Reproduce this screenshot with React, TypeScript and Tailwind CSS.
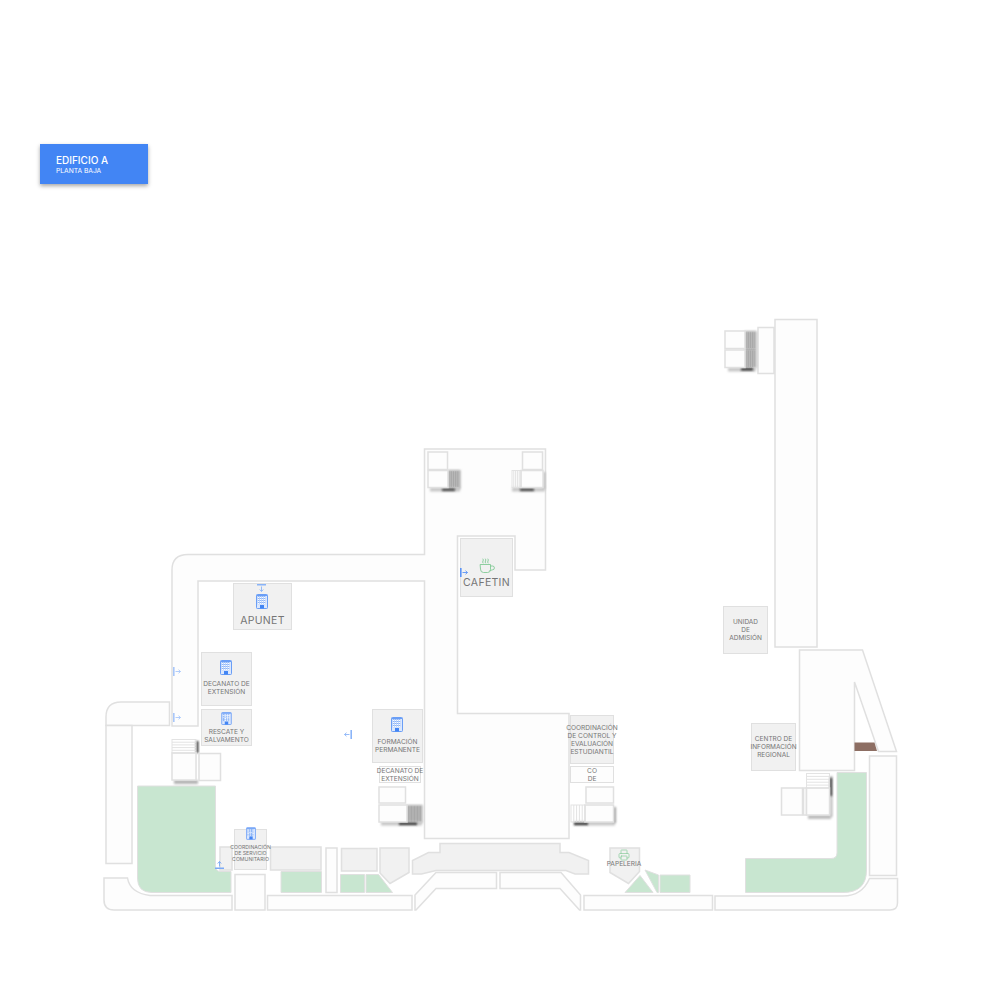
import type { ReactNode } from "react"
import { Printer } from "lucide-react"

const LINE = "#e0e0e0"
const GRAY = "#f1f1f1"
const GREEN = "#c8e6d0"
const HALL = "#fdfdfd"

const HALLS = [
  "M424.5 449H545.5V570H515V536H457.5V713.5H569V838.5H424.5V581H198V726H172V570Q172 554.5 188 554.5H424.5Z",
  "M106 725V717Q106 702 121 702H169.5V725.5H106Z",
  "M106 725.5H132V863.5H106Z",
  "M775 319.5H817V647H775Z",
  "M758 327.5H774V373.5H758Z",
  "M799.5 650H862.5L896.5 751.5H878.5L854.5 682V770.5H799.5Z",
  "M869.5 756H896.5V875.5H869.5Z",
  "M104 878H127.5Q130 893 150 895.5H232V910H114Q104 910 104 900Z",
  "M235 874.5H265V910H235Z",
  "M267.5 895.5H412V910H267.5Z",
  "M326 848H337V892.5H326Z",
  "M436 872.5H496.5V888.5H436L416 910H415V895Z",
  "M500 872.5H561L580.5 895V910H579.5L560 888.5H500Z",
  "M584 895.5H712.5V910H584Z",
  "M715 896H843Q862 896 869.5 878.5H897.5V903Q897.5 910 890 910H715Z",
]

const GREENS = [
  "M137.5 786H215.5V866Q215.5 871.5 221 871.5H231V892.5H152Q137.5 892.5 137.5 878Z",
  "M281 871.5H321.5V892.5H281Z",
  "M340.5 874.5H364.5V892.5H340.5Z",
  "M366 874.5H378.5L392.5 892.5H366Z",
  "M625 892.5L640 875.5L653 892.5Z",
  "M645 870L658.5 875V892.5H657Z",
  "M660 875H690V892.5H660Z",
  "M837 772.5H866.5V870Q866.5 892.5 843 892.5H745.5V858.5H831Q837 858.5 837 853Z",
]

const GRAY_SHAPES = [
  "M220 847H232V870H220Z",
  "M270.5 847H321V870H270.5Z",
  "M341.5 848.5H377V871H341.5Z",
  "M380 848H409V872.5L390 883.5L380 873Z",
  "M610 848H639.5V871.5L628.5 883.5L610 872.5Z",
  "M440 843.5H560V852.5H569L588.5 860.5V874H575L566 870.5H436L421.5 874H412.5V860.5L428.5 852.5H440Z",
]

// landing boxes beside each stairwell
const BOXES = [
  [428, 452, 19.5, 17.5],
  [428, 470.5, 20, 17],
  [522.5, 452, 20, 17.5],
  [521, 470.5, 22, 17],
  [379, 787, 26.5, 16],
  [379, 805, 28, 17],
  [586, 787, 27.5, 16],
  [585, 805, 28.5, 17],
  [725, 331, 20, 17.5],
  [725, 350, 20, 17.5],
  [172, 753, 24, 27],
  [199, 753.5, 21.5, 27],
  [781.5, 788, 21, 27],
  [803.5, 788, 3, 27],
  [806.5, 788, 23, 27],
]

// x, y, width, height, step direction, line opacity (faint where the flight sits in shadow)
const STAIRS: [number, number, number, number, "h" | "v", number][] = [
  [448, 470.5, 11, 17, "v", 0.3],
  [512, 470.5, 9, 17, "v", 0.9],
  [407, 805, 15, 17, "v", 0.3],
  [571, 805, 14, 17, "v", 0.9],
  [745, 331, 11, 17.5, "v", 0.3],
  [745, 350, 11, 17.5, "v", 0.3],
  [172, 739.5, 24, 13.5, "h", 0.9],
  [806.5, 773.5, 23, 14.5, "h", 0.9],
]

const SHADOWS = [
  [447.5, 470, 13, 19, "#a8a8a8"],
  [430, 487.5, 30, 4, "#c8c8c8"],
  [442, 488.5, 13, 2.5, "#444444"],
  [512, 487.5, 33, 4, "#c8c8c8"],
  [520, 488.5, 14, 2.5, "#444444"],
  [543, 472, 2.5, 17, "#bdbdbd"],
  [406.5, 805, 16, 18, "#a8a8a8"],
  [381, 821.5, 41, 4, "#c8c8c8"],
  [399, 822.5, 18, 2.5, "#333333"],
  [574, 821.5, 41, 4, "#c8c8c8"],
  [574, 822.5, 14, 2.5, "#333333"],
  [613.5, 807, 2.5, 16, "#9e9e9e"],
  [744.5, 331, 12, 37, "#a8a8a8"],
  [728, 367.5, 28, 4, "#c8c8c8"],
  [741, 368, 12, 2.5, "#333333"],
  [174, 780, 24, 4, "#b5b5b5"],
  [196, 741, 2.5, 12, "#444444"],
  [808, 815, 23, 4, "#bdbdbd"],
  [830, 776, 2.5, 41, "#bdbdbd"],
  [830, 778, 2, 18, "#333333"],
] as const

function FloorPlan() {
  return (
    <svg className="absolute inset-0" width={1000} height={1000} viewBox="0 0 1000 1000" fill="none">
      <defs>
        <filter id="soft" x="-60%" y="-60%" width="220%" height="220%">
          <feGaussianBlur stdDeviation="1.2" />
        </filter>
      </defs>
      {HALLS.map((d) => (
        <path key={d} d={d} fill={HALL} stroke={LINE} strokeWidth={1.5} />
      ))}
      <path d="M854.5 742.5H874.5L877 751H854.5Z" fill="#8d6e63" />
      {GREENS.map((d) => (
        <path key={d} d={d} fill={GREEN} stroke={LINE} strokeWidth={1} />
      ))}
      {GRAY_SHAPES.map((d) => (
        <path key={d} d={d} fill={GRAY} stroke={LINE} strokeWidth={1.5} />
      ))}
      {SHADOWS.map(([x, y, w, h, c], i) => (
        <rect key={i} x={x} y={y} width={w} height={h} fill={c} filter="url(#soft)" />
      ))}
      {BOXES.map(([x, y, w, h]) => (
        <rect key={`${x}-${y}`} x={x} y={y} width={w} height={h} fill={HALL} stroke={LINE} strokeWidth={1.5} />
      ))}
      {STAIRS.map(([x, y, w, h, dir, alpha]) => (
        <g key={`${x}-${y}`} stroke={LINE} opacity={alpha}>
          <rect x={x} y={y} width={w} height={h} strokeWidth={1} />
          {[1, 2, 3, 4].map((s) =>
            dir === "v" ? (
              <line key={s} x1={x + (w * s) / 5} x2={x + (w * s) / 5} y1={y} y2={y + h} />
            ) : (
              <line key={s} y1={y + (h * s) / 5} y2={y + (h * s) / 5} x1={x} x2={x + w} />
            ),
          )}
        </g>
      ))}
    </svg>
  )
}

function Building({ className }: { className: string }) {
  return (
    <svg className={`shrink-0 ${className}`} viewBox="0 0 12 15" fill="none">
      <rect x="0.5" y="0.5" width="11" height="14" rx="0.8" fill="#dce8fd" stroke="#6a9ef6" />
      <rect x="1" y="1" width="10" height="1" fill="#6a9ef6" />
      {[1.9, 3.9, 5.9, 7.9].map((x) =>
        [2.8, 4.8, 6.8, 8.8].map((y) => (
          <rect key={`${x}-${y}`} x={x} y={y} width="1.6" height="1.6" fill="#ffffff" stroke="#8ab4f8" strokeWidth="0.3" />
        )),
      )}
      <rect x="4" y="11" width="4" height="3.5" fill="#4285f4" />
    </svg>
  )
}

function CoffeeCup() {
  return (
    <svg className="h-[16px] w-[16px] shrink-0" viewBox="0 0 16 16" fill="none" stroke="#81c995" strokeWidth="0.9" strokeLinecap="round">
      <path d="M1.5 6.5H11.5V11.5A3 3 0 0 1 8.5 14.5H4.5A3 3 0 0 1 1.5 11.5Z" />
      <path d="M11.5 8H13.5A1.5 1.5 0 0 1 13.5 11.8L11 12.5" />
      <path d="M4 5Q3.2 4 4 3T4 1" />
      <path d="M6.5 5Q5.7 4 6.5 3T6.5 1" />
      <path d="M9 5Q8.2 4 9 3T9 1" />
    </svg>
  )
}

// exit marker: bar on one side, small arrow leading away from it
function ExitMark({ className }: { className: string }) {
  return (
    <svg className={`absolute h-[9px] w-[9px] ${className}`} viewBox="0 0 9 9" fill="none" stroke="currentColor" strokeWidth="0.9">
      <path d="M0.8 0V9" strokeWidth="1.6" />
      <path d="M2.5 4.5H7.5M5.5 2.7L7.5 4.5L5.5 6.3" />
    </svg>
  )
}

function Room({ className, children }: { className: string; children?: ReactNode }) {
  return (
    <div className={`absolute flex flex-col items-center whitespace-nowrap border-[1.5px] border-[#e0e0e0] text-center text-[#757575] ${className}`}>
      {children}
    </div>
  )
}

export default function App() {
  return (
    <div className="relative h-[1000px] w-[1000px] overflow-hidden bg-white font-['Inter',sans-serif]">
      <FloorPlan />

      <div className="absolute left-[40px] top-[144px] flex h-[40px] w-[108px] flex-col justify-center bg-[#4285f4] pl-[16px] pt-[1px] text-white shadow-[0_2px_4px_rgba(0,0,0,0.35)]">
        <div className="text-[10px] font-medium leading-[13px]">EDIFICIO A</div>
        <div className="text-[6.7px] leading-[9px]">PLANTA BAJA</div>
      </div>

      <Room className="left-[233px] top-[583px] h-[47px] w-[59px] gap-[5px] bg-[#f1f1f1] pt-[9.5px] text-[10.5px] leading-[13px] tracking-[0.3px]">
        <Building className="mr-[2px] h-[15px] w-[12px]" />
        <div>APUNET</div>
      </Room>
      <Room className="left-[201px] top-[652px] h-[54px] w-[51px] gap-[5px] bg-[#f1f1f1] pt-[7px] text-[6.6px] leading-[8px]">
        <Building className="mr-[2px] h-[15px] w-[12px]" />
        <div>DECANATO DE<br />EXTENSIÓN</div>
      </Room>
      <Room className="left-[201px] top-[709px] h-[37px] w-[51px] gap-[3px] bg-[#f1f1f1] pt-[1.5px] text-[6.6px] leading-[8px]">
        <Building className="h-[13px] w-[11px]" />
        <div>RESCATE Y<br />SALVAMENTO</div>
      </Room>
      <Room className="left-[372px] top-[709px] h-[54px] w-[51px] gap-[6px] bg-[#f1f1f1] pt-[7px] text-[6.6px] leading-[8px]">
        <Building className="mr-[2px] h-[15px] w-[12px]" />
        <div>FORMACIÓN<br />PERMANENTE</div>
      </Room>
      <Room className="left-[234px] top-[829px] h-[41px] w-[33px] gap-[4px] bg-[#f1f1f1] text-[5.2px] leading-[6px]">
        <Building className="-mt-[3.5px] h-[13px] w-[10px]" />
        <div>COORDINACIÓN<br />DE SERVICIO<br />COMUNITARIO</div>
      </Room>
      <Room className="left-[460px] top-[538px] h-[59px] w-[53px] gap-[2px] bg-[#f1f1f1] pt-[18.5px] text-[10.5px] leading-[13px] tracking-[0.3px]">
        <CoffeeCup />
        <div>CAFETIN</div>
      </Room>
      <Room className="left-[570px] top-[715px] h-[49px] w-[44px] justify-center bg-[#f1f1f1] text-[6.6px] leading-[8px]">
        <div>COORDINACIÓN<br />DE CONTROL Y<br />EVALUACIÓN<br />ESTUDIANTIL</div>
      </Room>
      <Room className="left-[723px] top-[606px] h-[48px] w-[45px] justify-center bg-[#f1f1f1] text-[6.5px] leading-[8px]">
        <div>UNIDAD<br />DE<br />ADMISIÓN</div>
      </Room>
      <Room className="left-[751px] top-[723px] h-[48px] w-[45px] justify-center bg-[#f1f1f1] text-[6.5px] leading-[8px]">
        <div>CENTRO DE<br />INFORMACIÓN<br />REGIONAL</div>
      </Room>
      <Room className="left-[379px] top-[766px] h-[17px] w-[42px] justify-center bg-[#fdfdfd] text-[6.6px] leading-[8px]">
        <div>DECANATO DE<br />EXTENSIÓN</div>
      </Room>
      <Room className="left-[570px] top-[766px] h-[17px] w-[44px] justify-center bg-[#fdfdfd] text-[6.6px] leading-[8px]">
        <div>CO<br />DE</div>
      </Room>

      <div className="absolute left-[609px] top-[849px] flex w-[30px] flex-col items-center whitespace-nowrap text-[6.6px] leading-[8px] text-[#757575]">
        <Printer className="h-[12px] w-[12px] text-[#81c995]" strokeWidth={1.3} />
        <div className="mt-[-1px]">PAPELERIA</div>
      </div>

      <ExitMark className="left-[257px] top-[584px] rotate-90 text-[#8ab4f8]" />
      <ExitMark className="left-[173px] top-[667px] text-[#a8c7fa]" />
      <ExitMark className="left-[173px] top-[713px] text-[#a8c7fa]" />
      <ExitMark className="left-[343px] top-[730px] rotate-180 text-[#8ab4f8]" />
      <ExitMark className="left-[460px] top-[568px] text-[#5b93f5]" />
      <ExitMark className="left-[215px] top-[860px] -rotate-90 text-[#7baaf7]" />
    </div>
  )
}
